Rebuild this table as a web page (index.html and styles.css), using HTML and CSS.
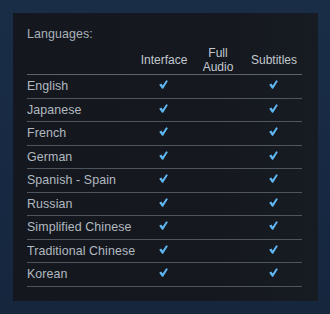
FILE: index.html
```html
<!DOCTYPE html>
<html>
<head>
<meta charset="utf-8">
<link rel="stylesheet" href="styles.css">
</head>
<body>
<svg width="0" height="0" class="defs">
  <defs>
    <symbol id="chk" viewBox="0 0 10 10">
      <path d="M0.2 5.4 L2.6 4.0 L4.1 6.0 L8.0 0.2 L9.9 1.2 L4.6 9.6 L3.4 9.6 Z"/>
    </symbol>
  </defs>
</svg>
<div class="panel">
  <div class="title">Languages:</div>
  <table class="langs">
    <thead>
      <tr>
        <th class="name"></th>
        <th class="col">Interface</th>
        <th class="col">Full<br>Audio</th>
        <th class="col">Subtitles</th>
      </tr>
    </thead>
    <tbody>
      <tr><td class="name">English</td><td class="col"><svg class="check"><use href="#chk"/></svg></td><td class="col"></td><td class="col"><svg class="check"><use href="#chk"/></svg></td></tr>
      <tr><td class="name">Japanese</td><td class="col"><svg class="check"><use href="#chk"/></svg></td><td class="col"></td><td class="col"><svg class="check"><use href="#chk"/></svg></td></tr>
      <tr><td class="name">French</td><td class="col"><svg class="check"><use href="#chk"/></svg></td><td class="col"></td><td class="col"><svg class="check"><use href="#chk"/></svg></td></tr>
      <tr><td class="name">German</td><td class="col"><svg class="check"><use href="#chk"/></svg></td><td class="col"></td><td class="col"><svg class="check"><use href="#chk"/></svg></td></tr>
      <tr><td class="name">Spanish - Spain</td><td class="col"><svg class="check"><use href="#chk"/></svg></td><td class="col"></td><td class="col"><svg class="check"><use href="#chk"/></svg></td></tr>
      <tr><td class="name">Russian</td><td class="col"><svg class="check"><use href="#chk"/></svg></td><td class="col"></td><td class="col"><svg class="check"><use href="#chk"/></svg></td></tr>
      <tr><td class="name">Simplified Chinese</td><td class="col"><svg class="check"><use href="#chk"/></svg></td><td class="col"></td><td class="col"><svg class="check"><use href="#chk"/></svg></td></tr>
      <tr><td class="name">Traditional Chinese</td><td class="col"><svg class="check"><use href="#chk"/></svg></td><td class="col"></td><td class="col"><svg class="check"><use href="#chk"/></svg></td></tr>
      <tr><td class="name">Korean</td><td class="col"><svg class="check"><use href="#chk"/></svg></td><td class="col"></td><td class="col"><svg class="check"><use href="#chk"/></svg></td></tr>
    </tbody>
  </table>
</div>
</body>
</html>
```
FILE: styles.css
```css
html, body {
  margin: 0;
  padding: 0;
}
body {
  width: 330px;
  height: 314px;
  background: linear-gradient(180deg, #1a2d47 0%, #172942 60%, #15263d 100%);
  font-family: "Liberation Sans", Arial, sans-serif;
  padding: 13px 12px 13px 13px;
  box-sizing: border-box;
}
.defs {
  position: absolute;
  width: 0;
  height: 0;
}
.panel {
  height: 288px;
  box-sizing: border-box;
  background: linear-gradient(90deg, #14181e 0%, #15191f 70%, #171b22 100%);
  padding: 14px 16px 0 14px;
  color: #b2b9c0;
}
.title {
  font-size: 12.4px;
  line-height: 14px;
  color: #a9b1b9;
  letter-spacing: 0.1px;
}
.langs {
  width: 100%;
  border-collapse: collapse;
  margin-top: 4px;
}
.langs th {
  font-weight: normal;
  font-size: 12px;
  line-height: 14px;
  color: #c2c8ce;
  padding: 0;
  vertical-align: middle;
  height: 29px;
  border-bottom: 1px solid #5d636a;
}
.langs td {
  font-size: 12.4px;
  letter-spacing: 0.1px;
  height: 22.5px;
  padding: 0;
  border-bottom: 1px solid #4f555c;
  vertical-align: middle;
}
.langs .name {
  text-align: left;
  width: 111px;
}
.langs .col {
  text-align: center;
}
.langs th.col:nth-child(2) { width: 52px; }
.langs th.col:nth-child(3) { width: 56px; }
.check {
  display: block;
  margin: -3px auto 0;
  position: relative;
  left: -0.5px;
  width: 9px;
  height: 9px;
  fill: #5fb6f1;
}
```
